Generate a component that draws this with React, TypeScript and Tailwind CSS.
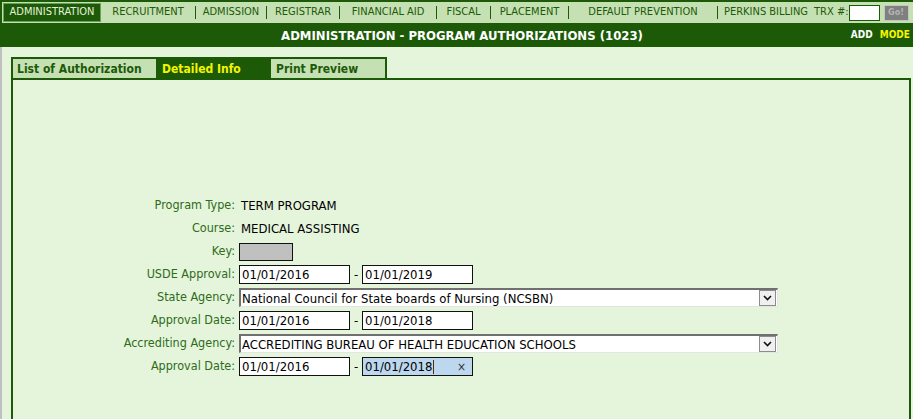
import * as React from "react";

const navItems = [
  { label: "RECRUITMENT", w: "w-[94px]" },
  { label: "ADMISSION", w: "w-[70px]" },
  { label: "REGISTRAR", w: "w-[72px]" },
  { label: "FINANCIAL AID", w: "w-[96px]" },
  { label: "FISCAL", w: "w-[53px]" },
  { label: "PLACEMENT", w: "w-[77px]" },
  { label: "DEFAULT PREVENTION", w: "w-[148px]" },
];

function DateBox({ value, active }: { value: string; active?: boolean }) {
  return (
    <div
      className={`w-[111px] h-[19px] border border-[#111] flex items-center pl-[2px] pr-[6px] text-[13px] text-black ${
        active ? "bg-[#bcd7ee]" : "bg-white"
      }`}
    >
      <span>{value}</span>
      {active && (
        <>
          <span className="w-px h-[14px] bg-[#5a2a00] ml-px" />
          <span className="ml-auto text-[12px] leading-none text-[#333]">×</span>
        </>
      )}
    </div>
  );
}

function DateRange({ from, to, active }: { from: string; to: string; active?: boolean }) {
  return (
    <div className="flex items-center">
      <DateBox value={from} />
      <span className="w-[12px] text-center text-[13px] text-black">-</span>
      <DateBox value={to} active={active} />
    </div>
  );
}

function SelectBox({ value }: { value: string }) {
  return (
    <div className="w-[539px] h-[19px] flex items-center bg-white border-t-2 border-l-2 border-[#707070] border-r border-b border-r-[#e4e4e4] border-b-[#e4e4e4]">
      <span className="flex-1 pl-[1px] text-[13px] text-black leading-none">{value}</span>
      <span className="w-[17px] h-[16px] mr-px flex items-center justify-center bg-[#f0f0f0] border border-[#8c8c8c]">
        <svg width="9" height="6" viewBox="0 0 9 6">
          <path d="M1 1 L4.5 4.5 L8 1" fill="none" stroke="#111" strokeWidth="1.6" />
        </svg>
      </span>
    </div>
  );
}

function Row({ label, children }: { label: string; children: React.ReactNode }) {
  return (
    <div className="flex items-center h-[23px]">
      <div className="w-[226px] pr-[4px] text-right text-[12.5px] text-[#2e6b1a]">{label}</div>
      {children}
    </div>
  );
}

export default function App() {
  return (
    <div className="w-[913px] h-[419px] overflow-hidden bg-[#e5f5dc] font-['Tahoma','DejaVu_Sans_Condensed','Liberation_Sans',sans-serif]">
      {/* top bars */}
      <div className="bg-[#1c5a08] pl-[2px] pt-[2px]">
        <nav className="h-[21px] bg-[#c5e0b3] flex items-center text-[11px] text-[#1c5a08]">
          <span className="ml-px h-[19px] w-[98px] flex items-center justify-center bg-[#1c5a08] border border-[#6b9f5c] text-[#e4f2d8]">
            ADMINISTRATION
          </span>
          {navItems.map((item) => (
            <React.Fragment key={item.label}>
              <span className={`${item.w} text-center`}>{item.label}</span>
              <span className="w-px h-[13px] bg-[#1c5a08]" />
            </React.Fragment>
          ))}
          <span className="pl-[6px]">PERKINS BILLING</span>
          <span className="ml-[6px]">TRX #:</span>
          <span className="w-[31px] h-[16px] bg-white border border-[#1c5a08]" />
          <span className="ml-[4px] w-[25px] h-[16px] bg-[#7f7f7f] border border-[#c5c5c5] flex items-center justify-center text-[9px] font-bold text-[#b5b5b5]">
            Go!
          </span>
        </nav>
        <div className="h-[24px] grid grid-cols-[1fr_auto_1fr] items-center">
          <span />
          <span className="text-[13px] font-bold text-white pt-[2px] pl-[9px]">
            ADMINISTRATION - PROGRAM AUTHORIZATIONS (1023)
          </span>
          <span className="self-start pt-[4px] pr-[3px] flex justify-end gap-[7px] text-[10px] font-bold">
            <span className="text-white">ADD</span>
            <span className="text-[#f5f500]">MODE</span>
          </span>
        </div>
      </div>

      {/* body */}
      <div className="border-l-2 border-[#c0c0c0] pt-[10px] pl-[9px] pr-[2px]">
        <div className="flex w-fit h-[21px] border-2 border-b-0 border-[#1c5a08] text-[12px] font-bold">
          <div className="w-[144px] pl-[4px] flex items-center bg-[#c5e0b3] text-[#1c5a08] border-r border-[#1c5a08]">
            List of Authorization
          </div>
          <div className="w-[114px] pl-[5px] flex items-center bg-[#1c5a08] text-[#f5f500]">
            Detailed Info
          </div>
          <div className="w-[114px] pl-[5px] flex items-center bg-[#c5e0b3] text-[#1c5a08]">
            Print Preview
          </div>
        </div>
        <div className="h-[400px] border-2 border-[#1c5a08] pt-[114px]">
          <Row label="Program Type:">
            <span className="text-[13px] text-black pl-[2px]">TERM PROGRAM</span>
          </Row>
          <Row label="Course:">
            <span className="text-[13px] text-black pl-[2px]">MEDICAL ASSISTING</span>
          </Row>
          <Row label="Key:">
            <div className="w-[54px] h-[18px] bg-[#c0c0c0] border border-[#111]" />
          </Row>
          <Row label="USDE Approval:">
            <DateRange from="01/01/2016" to="01/01/2019" />
          </Row>
          <Row label="State Agency:">
            <SelectBox value="National Council for State boards of Nursing (NCSBN)" />
          </Row>
          <Row label="Approval Date:">
            <DateRange from="01/01/2016" to="01/01/2018" />
          </Row>
          <Row label="Accrediting Agency:">
            <SelectBox value="ACCREDITING BUREAU OF HEALTH EDUCATION SCHOOLS" />
          </Row>
          <Row label="Approval Date:">
            <DateRange from="01/01/2016" to="01/01/2018" active />
          </Row>
        </div>
      </div>
    </div>
  );
}
